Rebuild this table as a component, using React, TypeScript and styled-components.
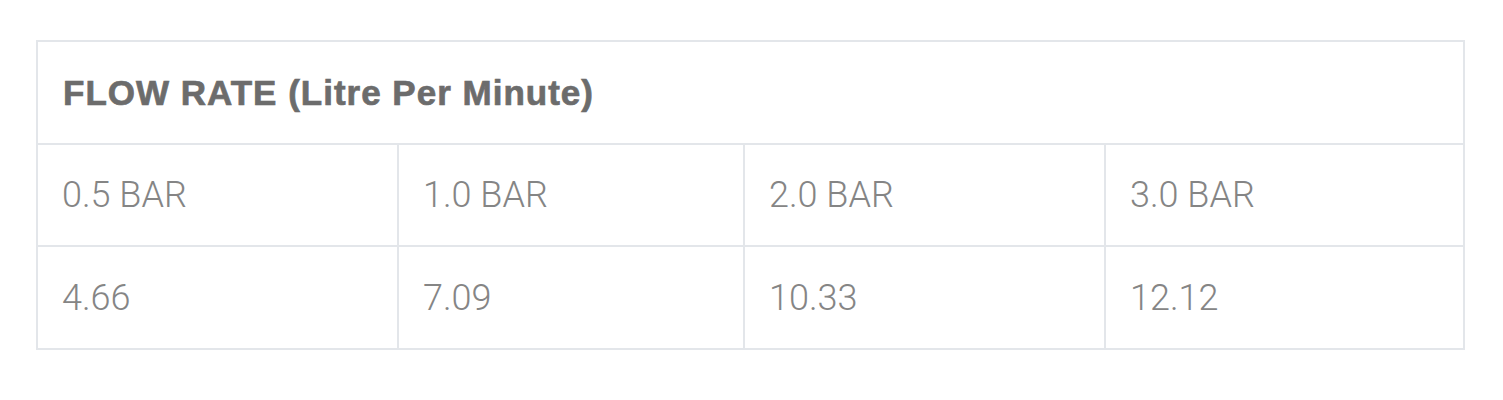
import React from "react";
import styled, { createGlobalStyle } from "styled-components";

const GlobalStyle = createGlobalStyle`
    html, body {
        margin: 0;
        padding: 0;
        background: #ffffff;
    }
`;

const pressures = ["0.5 BAR", "1.0 BAR", "2.0 BAR", "3.0 BAR"];
const rates = ["4.66", "7.09", "10.33", "12.12"];

const Page = styled.div`
    width: 1503px;
    height: 400px;
    padding: 40px 38px 0 36px;
    box-sizing: border-box;
`;

const Table = styled.div`
    display: grid;
    grid-template-columns: 359px 346px 361px 359px;
    border: 2px solid #e3e6ea;
`;

const TitleCell = styled.div`
    grid-column: 1 / -1;
    height: 101px;
    display: flex;
    align-items: center;
    padding-left: 25px;
    font-family: "Liberation Sans", Arial, sans-serif;
    font-weight: 700;
    font-size: 35px;
    letter-spacing: 1px;
    -webkit-text-stroke: 0.7px #6c6c6c;
    color: #6c6c6c;
`;

const Cell = styled.div<{ first: boolean; tall?: boolean }>`
    height: ${p => (p.tall ? "101px" : "100px")};
    display: flex;
    align-items: center;
    padding-left: 24px;
    border-top: 2px solid #e3e6ea;
    border-left: ${p => (p.first ? "none" : "2px solid #e3e6ea")};
    font-family: Roboto, "Liberation Sans", sans-serif;
    font-weight: 300;
    font-size: 36px;
    color: #858585;
`;

export default function App() {
    return (
        <>
            <GlobalStyle />
            <Page>
                <Table>
                    <TitleCell>FLOW RATE (Litre Per Minute)</TitleCell>
                    {pressures.map((p, i) => (
                        <Cell key={p} first={i === 0}>{p}</Cell>
                    ))}
                    {rates.map((r, i) => (
                        <Cell key={r} first={i === 0} tall>{r}</Cell>
                    ))}
                </Table>
            </Page>
        </>
    );
}
